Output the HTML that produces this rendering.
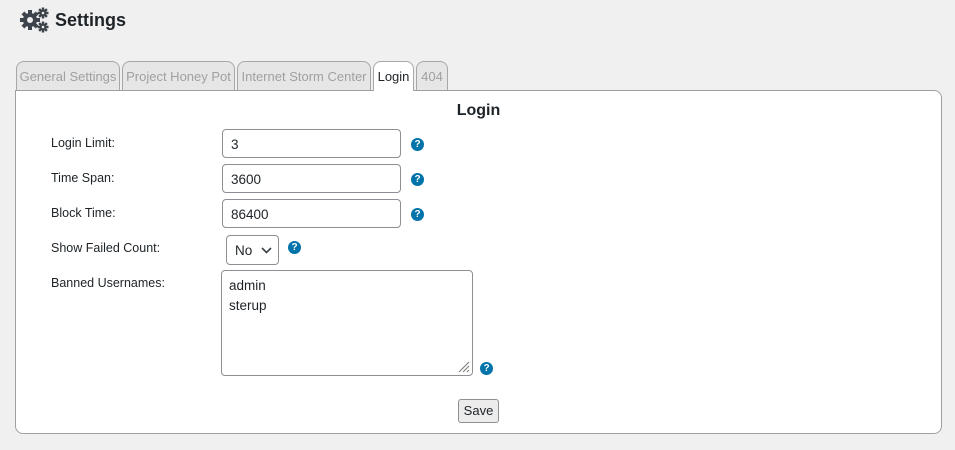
<!DOCTYPE html>
<html><head><style>
body{margin:0;width:955px;height:450px;background:#f0f0f1;font-family:"Liberation Sans",sans-serif;position:relative;overflow:hidden;color:#1d2327}
.a{position:absolute}
.title{left:55px;top:10px;font-size:18px;font-weight:bold;color:#1d2327}
.tab{position:absolute;top:61px;height:29px;box-sizing:border-box;border:1px solid #a7a7a7;border-bottom:none;border-radius:8px 8px 0 0;background:#e6e6e6;color:#a0a0a0;font-size:13px;line-height:30px;text-align:center}
.panel{left:15px;top:90px;width:927px;height:344px;box-sizing:border-box;border:1px solid #a0a0a0;border-radius:0 8px 8px 8px;background:#fff}
.lbl{position:absolute;left:51px;font-size:12.5px;color:#1d2327}
.inp{position:absolute;left:222px;width:179px;height:29px;box-sizing:border-box;border:1px solid #8c8f94;border-radius:4px;font-size:13.5px;padding:7px 8px;line-height:15px}
.q{position:absolute;width:13px;height:13px;border-radius:50%;background:#0073aa;color:#fff;font-size:10px;font-weight:bold;text-align:center;line-height:13px}
</style></head><body>
<svg class="a" style="left:20px;top:7px" width="30" height="27" viewBox="0 0 30 27">
<g fill="#3c434a">
<circle cx="10" cy="13" r="7"/>
<g transform="translate(10 13)"><rect x="-2" y="-10" width="4" height="20"/><rect x="-10" y="-2" width="20" height="4"/><rect x="-2" y="-10" width="4" height="20" transform="rotate(45)"/><rect x="-2" y="-10" width="4" height="20" transform="rotate(-45)"/></g>
<circle cx="23" cy="6" r="3.5"/><g transform="translate(23 6)"><rect x="-1.2" y="-5.5" width="2.4" height="11"/><rect x="-5.5" y="-1.2" width="11" height="2.4"/><rect x="-1.2" y="-5.5" width="2.4" height="11" transform="rotate(45)"/><rect x="-1.2" y="-5.5" width="2.4" height="11" transform="rotate(-45)"/></g>
<circle cx="23" cy="20" r="3.5"/><g transform="translate(23 20)"><rect x="-1.2" y="-5.5" width="2.4" height="11"/><rect x="-5.5" y="-1.2" width="11" height="2.4"/><rect x="-1.2" y="-5.5" width="2.4" height="11" transform="rotate(45)"/><rect x="-1.2" y="-5.5" width="2.4" height="11" transform="rotate(-45)"/></g>
</g>
<circle cx="10" cy="13" r="3" fill="#f0f0f1"/><circle cx="23" cy="6" r="1.3" fill="#f0f0f1"/><circle cx="23" cy="20" r="1.3" fill="#f0f0f1"/>
</svg>
<div class="a title">Settings</div>
<div class="a panel"></div>
<div class="tab" style="left:16px;width:104px">General Settings</div>
<div class="tab" style="left:122px;width:113px">Project Honey Pot</div>
<div class="tab" style="left:237px;width:134px">Internet Storm Center</div>
<div class="tab" style="left:373px;width:41px;height:30px;background:#fff;color:#1d2327">Login</div>
<div class="tab" style="left:416px;width:32px">404</div>
<div class="a" style="left:15px;width:927px;top:102px;text-align:center;font-size:16px;font-weight:bold">Login</div>
<div class="lbl" style="top:136px">Login Limit:</div>
<div class="lbl" style="top:171px">Time Span:</div>
<div class="lbl" style="top:206px">Block Time:</div>
<div class="lbl" style="top:241px">Show Failed Count:</div>
<div class="lbl" style="top:276px">Banned Usernames:</div>
<div class="inp" style="top:129px">3</div>
<div class="inp" style="top:164px">3600</div>
<div class="inp" style="top:199px">86400</div>
<div class="q" style="left:411px;top:138px">?</div>
<div class="q" style="left:411px;top:173px">?</div>
<div class="q" style="left:411px;top:208px">?</div>
<div class="inp" style="left:226px;top:235px;width:53px;height:30px;padding:7px 8px">No<svg style="position:absolute;left:34px;top:11px" width="11" height="7"><path d="M1 1l4.5 4.5L10 1" stroke="#3c434a" stroke-width="1.6" fill="none"/></svg></div>
<div class="q" style="left:288px;top:241px">?</div>
<div class="inp" style="left:221px;top:270px;width:252px;height:106px;padding:5px 7px;line-height:20px">admin<br>sterup
<svg style="position:absolute;right:2px;bottom:2px" width="12" height="12"><path d="M11 1L1 11M11 5L5 11M11 9L9 11" stroke="#777" stroke-width="1"/></svg></div>
<div class="q" style="left:480px;top:362px">?</div>
<div class="a" style="left:458px;top:399px;width:41px;height:24px;box-sizing:border-box;border:1px solid #8c8f94;border-radius:3px;background:#ececec;font-size:13px;text-align:center;line-height:22px">Save</div>
</body></html>
